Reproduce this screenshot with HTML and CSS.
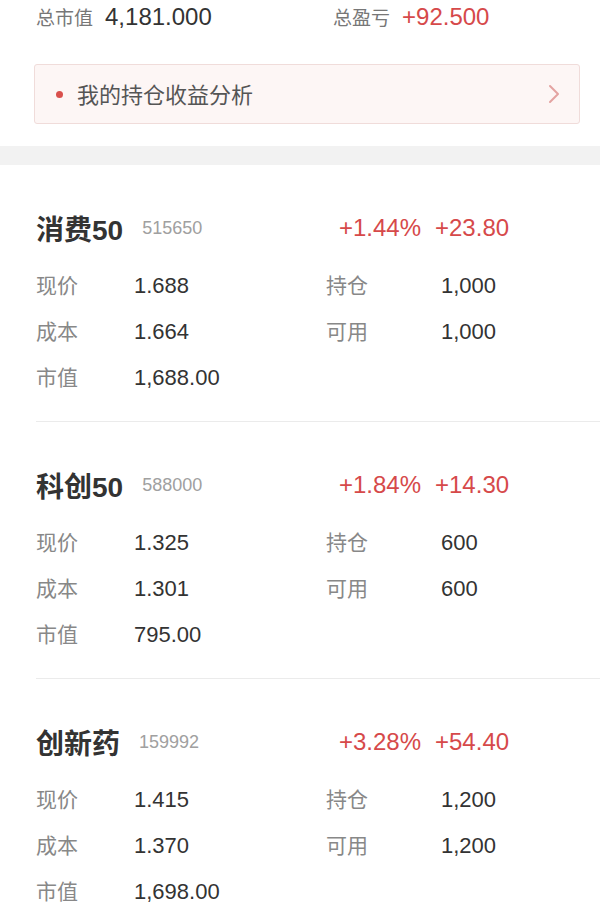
FILE: index.html
```html
<!DOCTYPE html>
<html lang="zh-CN">
<head>
  <meta charset="UTF-8" />
  <meta name="viewport" content="width=device-width, initial-scale=1.0"/>
  <title>我的持仓</title>
  <link rel="stylesheet" href="styles.css">
</head>
<body>
  <header class="summary">
    <div class="sum-item">
      <span class="sum-label">总市值</span>
      <span class="sum-value">4,181.000</span>
    </div>
    <div class="sum-item">
      <span class="sum-label">总盈亏</span>
      <span class="sum-value up">+92.500</span>
    </div>
  </header>

  <a class="banner" href="#">
    <span class="dot"></span>
    <span class="banner-text">我的持仓收益分析</span>
    <svg class="chevron" width="14" height="20" viewBox="0 0 14 20">
      <path d="M3 2 L11 10 L3 18" fill="none" stroke="#e3a3a1" stroke-width="2" stroke-linecap="round" stroke-linejoin="round"/>
    </svg>
  </a>

  <div class="band"></div>

  <main>
    <section class="card">
      <div class="card-head">
        <div class="name-group">
          <span class="name">消费50</span>
          <span class="code">515650</span>
        </div>
        <span class="pct up">+1.44%</span>
        <span class="amount up">+23.80</span>
      </div>
      <div class="grid">
        <span class="label">现价</span><span class="value">1.688</span>
        <span class="label">持仓</span><span class="value">1,000</span>
        <span class="label">成本</span><span class="value">1.664</span>
        <span class="label">可用</span><span class="value">1,000</span>
        <span class="label">市值</span><span class="value">1,688.00</span>
      </div>
    </section>

    <section class="card">
      <div class="card-head">
        <div class="name-group">
          <span class="name">科创50</span>
          <span class="code">588000</span>
        </div>
        <span class="pct up">+1.84%</span>
        <span class="amount up">+14.30</span>
      </div>
      <div class="grid">
        <span class="label">现价</span><span class="value">1.325</span>
        <span class="label">持仓</span><span class="value">600</span>
        <span class="label">成本</span><span class="value">1.301</span>
        <span class="label">可用</span><span class="value">600</span>
        <span class="label">市值</span><span class="value">795.00</span>
      </div>
    </section>

    <section class="card">
      <div class="card-head">
        <div class="name-group">
          <span class="name">创新药</span>
          <span class="code">159992</span>
        </div>
        <span class="pct up">+3.28%</span>
        <span class="amount up">+54.40</span>
      </div>
      <div class="grid">
        <span class="label">现价</span><span class="value">1.415</span>
        <span class="label">持仓</span><span class="value">1,200</span>
        <span class="label">成本</span><span class="value">1.370</span>
        <span class="label">可用</span><span class="value">1,200</span>
        <span class="label">市值</span><span class="value">1,698.00</span>
      </div>
    </section>
  </main>
</body>
</html>
```

FILE: styles.css
```css
body {
  margin: 0;
  font-family: "Liberation Sans", "Noto Sans CJK SC", sans-serif;
  background: #fff;
  color: #333;
  overflow: hidden;
}

/* summary */
.summary {
  display: flex;
  height: 33px;
  align-items: center;
  padding-left: 36px;
}

.sum-item {
  display: flex;
  align-items: baseline;
  gap: 12px;
  flex: 0 0 297px;
}

.sum-label {
  font-size: 19px;
  color: #777;
}

.sum-value {
  font-size: 24px;
  color: #333;
}

/* banner */
.banner {
  display: flex;
  align-items: center;
  box-sizing: border-box;
  height: 60px;
  margin: 31px 20px 0 34px;
  padding: 0 18px 3px 21px;
  background: #fdf6f5;
  border: 1px solid #f0dcda;
  border-radius: 3px;
  text-decoration: none;
}

.dot {
  width: 7px;
  height: 7px;
  border-radius: 50%;
  background: #d9504c;
  margin: 3px 14px 0 0;
}

.banner-text {
  flex: 1;
  font-size: 22px;
  color: #555;
}

.chevron {
  margin-top: 3px;
}

.band {
  height: 19px;
  margin-top: 22px;
  background: #f2f2f2;
}

/* cards */
.card {
  margin-left: 36px;
  padding: 43px 0 20px;
  border-bottom: 1px solid #ebebeb;
}

.card:last-child {
  border-bottom: none;
}

.card-head {
  display: flex;
  align-items: center;
  height: 40px;
}

.name-group {
  display: flex;
  align-items: center;
  gap: 19px;
  width: 290px;
}

.name {
  font-size: 28px;
  font-weight: 600;
  color: #333;
}

.code {
  font-size: 18px;
  color: #a0a0a0;
}

.pct {
  width: 95px;
  text-align: right;
  font-size: 24px;
}

.amount {
  margin-left: 14px;
  font-size: 24px;
}

.up,
.sum-value.up {
  color: #d6494a;
}

.grid {
  display: grid;
  grid-template-columns: 98px 192px 115px auto;
  grid-auto-rows: 46px;
  align-items: baseline;
  line-height: 46px;
  margin-top: 15px;
}

.label {
  font-size: 21px;
  color: #888;
}

.value {
  font-size: 22px;
  color: #333;
}
```
